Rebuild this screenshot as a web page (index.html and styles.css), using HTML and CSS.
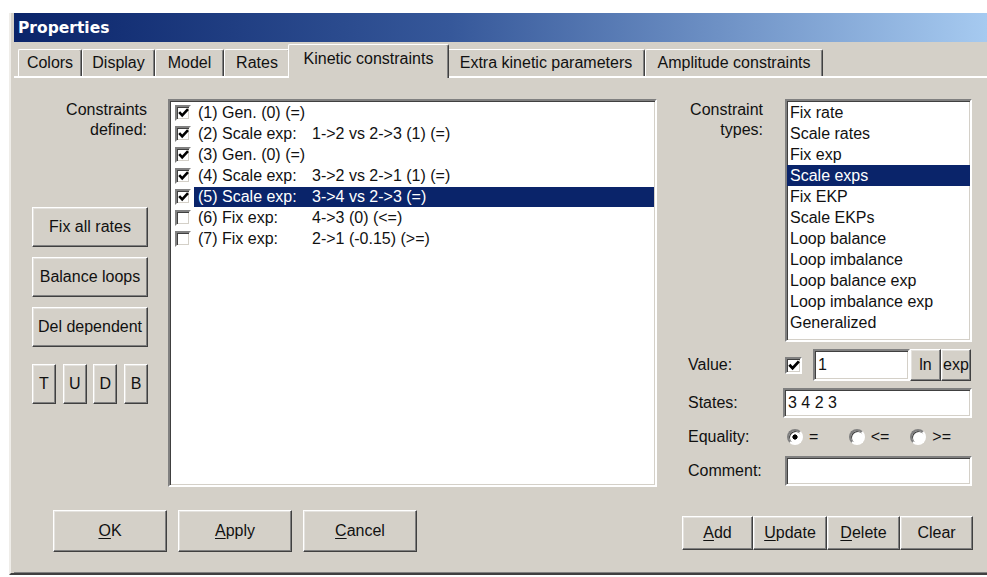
FILE: index.html
```html
<!DOCTYPE html>
<html lang="en">
<head>
<meta charset="utf-8">
<title>Properties</title>
<link rel="stylesheet" href="styles.css">
</head>
<body>
<div class="window">
  <div class="titlebar"><span class="title">Properties</span></div>

  <div class="tabs">
    <div class="tab tab-colors">Colors</div>
    <div class="tab tab-display">Display</div>
    <div class="tab tab-model">Model</div>
    <div class="tab tab-rates">Rates</div>
    <div class="tab tab-kinetic active">Kinetic constraints</div>
    <div class="tab tab-extra">Extra kinetic parameters</div>
    <div class="tab tab-amplitude">Amplitude constraints</div>
  </div>

  <div class="panel">
    <div class="main">
      <div class="side">
        <div class="side-label">Constraints<br>defined:</div>
        <div class="side-buttons">
          <button class="btn btn-side">Fix all rates</button>
          <button class="btn btn-side">Balance loops</button>
          <button class="btn btn-side">Del dependent</button>
          <div class="small-btns">
            <button class="btn btn-sq">T</button>
            <button class="btn btn-sq">U</button>
            <button class="btn btn-sq">D</button>
            <button class="btn btn-sq">B</button>
          </div>
        </div>
      </div>

      <div class="sunken listbox constraints">
        <div class="row"><span class="check on"><svg viewBox="0 0 11 11"><polyline points="1.2,5.2 4.2,8.4 10,2.2"/></svg></span><span class="item">(1) Gen. (0) (=)</span></div>
        <div class="row"><span class="check on"><svg viewBox="0 0 11 11"><polyline points="1.2,5.2 4.2,8.4 10,2.2"/></svg></span><span class="item"><span class="kind">(2) Scale exp:</span>1-&gt;2 vs 2-&gt;3 (1) (=)</span></div>
        <div class="row"><span class="check on"><svg viewBox="0 0 11 11"><polyline points="1.2,5.2 4.2,8.4 10,2.2"/></svg></span><span class="item">(3) Gen. (0) (=)</span></div>
        <div class="row"><span class="check on"><svg viewBox="0 0 11 11"><polyline points="1.2,5.2 4.2,8.4 10,2.2"/></svg></span><span class="item"><span class="kind">(4) Scale exp:</span>3-&gt;2 vs 2-&gt;1 (1) (=)</span></div>
        <div class="row selected"><span class="check on"><svg viewBox="0 0 11 11"><polyline points="1.2,5.2 4.2,8.4 10,2.2"/></svg></span><span class="item"><span class="kind">(5) Scale exp:</span>3-&gt;4 vs 2-&gt;3 (=)</span></div>
        <div class="row"><span class="check"></span><span class="item"><span class="kind">(6) Fix exp:</span>4-&gt;3 (0) (&lt;=)</span></div>
        <div class="row"><span class="check"></span><span class="item"><span class="kind">(7) Fix exp:</span>2-&gt;1 (-0.15) (&gt;=)</span></div>
      </div>

      <div class="editor">
        <div class="lbl lbl-types">Constraint<br>types:</div>
        <div class="sunken listbox types">
          <div class="type">Fix rate</div>
          <div class="type">Scale rates</div>
          <div class="type">Fix exp</div>
          <div class="type selected">Scale exps</div>
          <div class="type">Fix EKP</div>
          <div class="type">Scale EKPs</div>
          <div class="type">Loop balance</div>
          <div class="type">Loop imbalance</div>
          <div class="type">Loop balance exp</div>
          <div class="type">Loop imbalance exp</div>
          <div class="type">Generalized</div>
        </div>

        <div class="lbl">Value:</div>
        <div class="value-row">
          <span class="check big on"><svg viewBox="0 0 11 11"><polyline points="1.2,5.2 4.2,8.4 10,2.2"/></svg></span>
          <div class="sunken field field-value">1</div>
          <button class="btn btn-mini">ln</button>
          <button class="btn btn-mini btn-exp">exp</button>
        </div>

        <div class="lbl">States:</div>
        <div class="sunken field field-states">3 4 2 3</div>

        <div class="lbl">Equality:</div>
        <div class="equality">
          <span class="opt"><span class="radio on"></span>=</span>
          <span class="opt"><span class="radio"></span>&lt;=</span>
          <span class="opt"><span class="radio"></span>&gt;=</span>
        </div>

        <div class="lbl">Comment:</div>
        <div class="sunken field field-comment"></div>
      </div>
    </div>

    <div class="footer">
      <div class="footer-left">
        <button class="btn btn-main"><u>O</u>K</button>
        <button class="btn btn-main"><u>A</u>pply</button>
        <button class="btn btn-main"><u>C</u>ancel</button>
      </div>
      <div class="footer-right">
        <button class="btn btn-act btn-add"><u>A</u>dd</button>
        <button class="btn btn-act btn-update"><u>U</u>pdate</button>
        <button class="btn btn-act btn-delete"><u>D</u>elete</button>
        <button class="btn btn-act btn-clear">Clear</button>
      </div>
    </div>
  </div>
</div>
</body>
</html>
```
FILE: styles.css
```css
* { box-sizing: border-box; }

html, body {
  margin: 0;
  background: #ffffff;
  overflow: hidden;
}

body {
  width: 987px;
  height: 577px;
  font-family: "Liberation Sans", Arial, sans-serif;
  font-size: 16px;
  color: #111111;
}

/* dialog frame */
.window {
  margin: 13px 0 0 9px;
  background: #d4d0c8;
  border-left: 2px solid #efede9;
  border-bottom: 2px solid #404040;
  padding-left: 3px;
}

.titlebar {
  height: 29px;
  background: linear-gradient(to right, #0a246a 0%, #36589a 45%, #a6caf0 100%);
  padding-left: 4px;
}

.title {
  font-family: "DejaVu Sans", Verdana, sans-serif;
  font-weight: bold;
  font-size: 15.5px;
  line-height: 31px;
  color: #ffffff;
}

/* tab strip */
.tabs {
  display: flex;
  align-items: flex-end;
  height: 32px;
  margin-top: 2px;
  padding-left: 4px;
}

.tab {
  height: 27px;
  padding-top: 3px;
  line-height: 20px;
  text-align: center;
  white-space: nowrap;
  background: #d4d0c8;
  border-top: 1px solid #ffffff;
  border-left: 1px solid #ffffff;
  border-right: 1px solid #404040;
  box-shadow: inset -1px 0 #808080;
  border-top-left-radius: 2px;
  border-top-right-radius: 2px;
}

.tab-colors { width: 64px; }
.tab-display { width: 73px; }
.tab-model { width: 69px; }
.tab-rates { width: 66px; }
.tab-extra { width: 198px; }
.tab-amplitude { width: 178px; }

.tab.active {
  position: relative;
  z-index: 1;
  width: 161px;
  height: 34px;
  margin: 0 -2px -2px -2px;
  padding-top: 4px;
}

.panel {
  height: 497px;
  border-top: 2px solid #ffffff;
  border-bottom: 1px solid #808080;
  padding: 21px 0 0 18px;
}

.main {
  display: flex;
  align-items: flex-start;
}

/* left column */
.side {
  width: 116px;
}

.side-label {
  text-align: right;
  line-height: 20px;
  padding-top: 1px;
  padding-right: 1px;
}

.side-buttons {
  margin-top: 67px;
  display: flex;
  flex-direction: column;
  gap: 10px;
}

.btn {
  font-family: inherit;
  font-size: 16px;
  color: #111111;
  background: #d4d0c8;
  border: 1px solid;
  border-color: #ffffff #404040 #404040 #ffffff;
  box-shadow: inset -1px -1px #808080, inset 1px 1px #e4e2de;
  padding: 0;
  margin: 0;
  text-align: center;
  white-space: nowrap;
}

.btn u { text-decoration-thickness: 1px; text-underline-offset: 2px; }

.btn-side {
  width: 116px;
  height: 40px;
}

.small-btns {
  margin-top: 7px;
  display: flex;
  justify-content: space-between;
}

.btn-sq {
  width: 24px;
  height: 40px;
}

/* sunken controls */
.sunken {
  background: #ffffff;
  border: 2px solid;
  border-color: #808080 #ffffff #ffffff #808080;
  box-shadow: inset 1px 1px #404040, inset -1px -1px #d4d0c8;
}

.listbox {
  overflow: hidden;
  line-height: 21px;
}

.constraints {
  width: 489px;
  height: 388px;
  margin-left: 20px;
  padding: 1px 1px 0 5px;
}

.row {
  display: flex;
  align-items: center;
  height: 21px;
  white-space: nowrap;
}

.check {
  flex: 0 0 auto;
  width: 16px;
  height: 16px;
  background: #ffffff;
  border: 2px solid;
  border-color: #808080 #ffffff #ffffff #808080;
  box-shadow: inset 1px 1px #404040, inset -1px -1px #d4d0c8;
  display: flex;
  align-items: center;
  justify-content: center;
}

.check svg {
  width: 11px;
  height: 11px;
  fill: none;
  stroke: #000000;
  stroke-width: 2.6;
  display: none;
}

.check.on svg { display: block; }

.item {
  flex: 1;
  margin-left: 3px;
  padding-left: 4px;
  height: 20px;
  line-height: 20px;
}

.kind {
  display: inline-block;
  width: 114px;
}

.row.selected .item {
  background: #0a246a;
  color: #ffffff;
}

/* right column */
.editor {
  margin-left: 31px;
  display: grid;
  grid-template-columns: 95px 189px;
  row-gap: 7px;
  align-items: center;
}

.lbl {
  white-space: nowrap;
}

.lbl-types {
  align-self: start;
  text-align: right;
  padding-right: 20px;
  padding-top: 1px;
  line-height: 20px;
}

.types {
  width: 187px;
  height: 243px;
  margin-left: 2px;
  padding: 1px 0 0 0;
}

.type {
  height: 21px;
  padding-left: 3px;
  white-space: nowrap;
}

.type.selected {
  background: #0a246a;
  color: #ffffff;
}

.value-row {
  display: flex;
  align-items: center;
  height: 32px;
}

.check.big {
  width: 17px;
  height: 17px;
  margin-left: 2px;
  margin-right: 11px;
}

.check.big svg { width: 12px; height: 12px; }

.field {
  height: 30px;
  line-height: 26px;
  padding-left: 3px;
  white-space: nowrap;
}

.field-value {
  width: 97px;
  height: 32px;
  line-height: 28px;
}

.btn-mini {
  width: 31px;
  height: 32px;
  overflow: hidden;
}

.btn-exp {
  width: 30px;
  text-align: left;
  padding-left: 1px;
}

.field-states { width: 189px; }

.field-comment {
  width: 187px;
  margin-left: 2px;
}

.equality {
  display: flex;
  align-items: center;
  height: 24px;
  padding-left: 4px;
}

.opt {
  display: flex;
  align-items: center;
  gap: 6px;
  width: 65px;
}

.radio {
  width: 16px;
  height: 16px;
  border-radius: 50%;
  background: #ffffff;
  border: 2px solid;
  border-color: #808080 #ffffff #ffffff #808080;
  box-shadow: inset 1px 1px #404040;
}

.radio.on {
  background: radial-gradient(circle, #000000 0 2.3px, #ffffff 2.9px);
}

/* bottom buttons */
.footer {
  margin-top: 23px;
  display: flex;
  align-items: flex-start;
  padding-left: 21px;
  padding-right: 14px;
}

.footer-left {
  display: flex;
  gap: 11px;
}

.btn-main {
  width: 114px;
  height: 42px;
}

.footer-right {
  margin-left: auto;
  margin-top: 6px;
  display: flex;
}

.btn-act { height: 34px; }
.btn-add { width: 71px; }
.btn-update { width: 74px; }
.btn-delete { width: 73px; }
.btn-clear { width: 73px; }
```
